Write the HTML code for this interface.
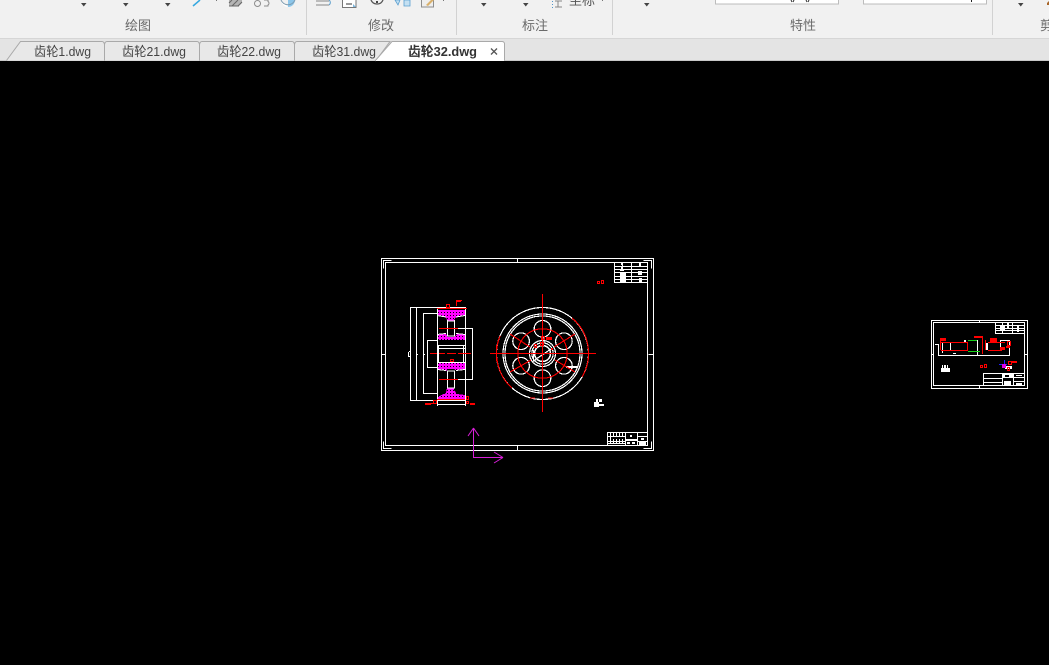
<!DOCTYPE html>
<html lang="zh">
<head>
<meta charset="utf-8">
<title>齿轮32.dwg</title>
<style>
html,body{margin:0;padding:0;background:#000}
body{width:1049px;height:665px;overflow:hidden;position:relative;font-family:"Liberation Sans","Noto Sans CJK SC",sans-serif}
svg{position:absolute;left:0;top:0;display:block}
text{font-family:"Liberation Sans","Noto Sans CJK SC",sans-serif}
</style>
</head>
<body>
<svg width="1049" height="665" viewBox="0 0 1049 665" xmlns="http://www.w3.org/2000/svg">
<defs>
<pattern id="h" width="3" height="3" patternUnits="userSpaceOnUse">
<rect width="3" height="3" fill="#ff00ff"/><rect width="1" height="1" fill="#000"/>
</pattern>
</defs>
<rect width="1049" height="665" fill="#000"/>
<!-- ribbon -->
<rect width="1049" height="38" fill="#f1f1f1"/>
<rect y="38" width="1049" height="1" fill="#d6d6d6"/>
<rect y="39" width="1049" height="21" fill="#e4e4e4"/>
<rect y="60" width="1049" height="1" fill="#c8c8c8"/>
<g fill="#d2d2d2">
<rect x="306" y="0" width="1" height="35"/><rect x="456" y="0" width="1" height="35"/>
<rect x="612" y="0" width="1" height="35"/><rect x="992" y="0" width="1" height="35"/>
</g>
<g fill="#6a6a6a" font-size="13">
<text x="125" y="30">绘图</text><text x="368" y="30">修改</text><text x="522" y="30">标注</text>
<text x="790" y="30">特性</text><text x="1040" y="30">剪</text>
</g>
<!-- dropdown arrows -->
<g fill="#444">
<path d="M81 3h5.500l-2.750 3.500z"/><path d="M123 3h5.500l-2.750 3.500z"/><path d="M165 3h5.500l-2.750 3.500z"/>
<path d="M481 3h5.500l-2.750 3.500z"/><path d="M523 3h5.500l-2.750 3.500z"/><path d="M644 3h5.500l-2.750 3.500z"/><path d="M1018 3h5.500l-2.750 3.500z"/>
</g>
<!-- partial ribbon icons -->
<path d="M193 6L200 0" stroke="#35a8e0" stroke-width="1.500" fill="none"/>
<rect x="216" y="0" width="1" height="1" fill="#777"/>
<path d="M229 0h13v3l-3 3h-10z" fill="#b4b4b4"/>
<path d="M229 6h10M232 0l-3 3M238 0l-6 6M242 2l-4 4" stroke="#666" fill="none"/>
<g fill="none" stroke="#8c8c8c"><circle cx="257.500" cy="3.500" r="3"/><path d="M264 0h4v1.500a2 2 0 0 1 0 3.500v1h-4"/></g>
<path d="M281 0a7.500 7.500 0 0 0 7 7z" fill="#fff"/><path d="M288 0v7a7 7 0 0 0 7-7z" fill="#8cc6ea"/>
<path d="M281 0a7.500 7.500 0 0 0 14 0" fill="none" stroke="#7c9bb0"/>
<path d="M316 1h13M316 5h13" stroke="#888" fill="none"/><path d="M329 0a3 3 0 0 1 0 5" stroke="#5e9fcc" fill="none"/>
<path d="M342.500 0v7.500H356V0" fill="#fff" stroke="#777"/><path d="M346 4h6" stroke="#333"/><path d="M353 4l3 3h-3z" fill="#7cb8e0"/>
<path d="M371 0a6.500 6.500 0 0 0 12 0" fill="none" stroke="#555" stroke-width="1.300"/><rect x="376" y="1" width="2" height="2" fill="#444"/>
<path d="M395 0l3 5 2-5zM404 0v6h6V0z" fill="#c4e0f2" stroke="#5a9fd0" stroke-width=".8"/>
<rect x="421.500" y="-1" width="12" height="8" fill="#eee" stroke="#8d8d8d"/><path d="M426 5l5-5h3l-6 6z" fill="#d9b06a"/>
<rect x="443" y="0" width="1" height="1" fill="#777"/>
<g fill="#4f94c9"><rect x="552" y="1" width="1" height="1"/><rect x="552" y="4" width="1" height="1"/><rect x="552" y="7" width="1" height="1"/></g>
<path d="M555 1h7M558 1v6M555 7h7" stroke="#888" fill="none"/>
<text x="569" y="5" font-size="13" fill="#555">坐标</text>
<rect x="602" y="0" width="1" height="1" fill="#777"/>
<!-- inputs -->
<rect x="715.500" y="-4" width="123" height="8" fill="#fff" stroke="#bcbcbc"/>
<rect x="863.500" y="-4" width="123" height="8" fill="#fff" stroke="#bcbcbc"/>
<path d="M791 0l1 2M794 0l-1 2M806 0l1 2M809 0l-1 2" stroke="#333" fill="none"/>
<rect x="971" y="0" width="1" height="2" fill="#222"/>
<path d="M1047 3l2-2v4h-2z" fill="#a7662a"/>
<!-- tabs -->
<g fill="#e8e8e8" stroke="#a9a9a9">
<path d="M6.500 60.500L20.500 41.500H102q2 0 2.500 3V60.500"/>
<path d="M104.500 60.500V44.500q.5-3 2.500-3H197q2 0 2.500 3V60.500"/>
<path d="M199.500 60.500V44.500q.5-3 2.500-3H292q2 0 2.500 3V60.500"/>
<path d="M294.500 60.500V44.500q.5-3 2.500-3H390L376 60.500"/>
</g>
<path d="M375 61L392 41.500H502q2 0 2.500 2V60.500" fill="#fff" stroke="#a9a9a9"/>
<rect x="376" y="60" width="128" height="1" fill="#fff"/>
<g font-size="13" fill="#444">
<text x="34" y="56" textLength="57" lengthAdjust="spacingAndGlyphs">齿轮1.dwg</text>
<text x="122" y="56" textLength="64" lengthAdjust="spacingAndGlyphs">齿轮21.dwg</text>
<text x="217" y="56" textLength="64" lengthAdjust="spacingAndGlyphs">齿轮22.dwg</text>
<text x="312" y="56" textLength="64" lengthAdjust="spacingAndGlyphs">齿轮31.dwg</text>
</g>
<text x="408" y="56" font-size="13" font-weight="700" fill="#333" textLength="69" lengthAdjust="spacingAndGlyphs">齿轮32.dwg</text>
<path d="M491 48.500l6 6M497 48.500l-6 6" stroke="#555" stroke-width="1.300" fill="none"/>

<!-- main drawing frame -->
<g fill="none" stroke="#fff" shape-rendering="crispEdges">
<rect x="381.500" y="258.500" width="272" height="192"/>
<rect x="385.500" y="262.500" width="262" height="183"/>
<path d="M383.500 268.500v-8h8M383.500 441.500v7h8M651.500 268.500v-8h-8M651.500 441.500v7h-8"/>
<path d="M517.500 258.500v4M517.500 445.500v5M381.500 354.500h4M648.500 354.500h5"/>
</g>

<!-- left section view: hatching -->
<g fill="url(#h)" shape-rendering="crispEdges">
<path d="M437 310H465V315L456 317 454 320V321H448L447 320 446 317 437 315z"/>
<path d="M437 340H465V335L457 334 454 337H448L446 334 437 335z"/>
<path d="M437 362H465V369L457 371 454 369H448L446 371 437 369z"/>
<path d="M437 399H465V395L457 394 454 390V388H447L446 393 437 397z"/>
</g>
<!-- left section view: lines -->
<g fill="none" stroke="#fff" shape-rendering="crispEdges">
<path d="M437.500 307.500H410.500V400.500H465.500V307.500H437.500V405"/>
<path d="M416.500 307.500V400.500"/>
<path d="M437.500 313.500H423.500V393.500H437.500"/>
<path d="M437.500 340.500H427.500V367.500H437.500"/>
<path d="M455.500 328.500H472.500V379.500H455.500"/>
<path d="M409 352.500h-0.500V356.500H410M409 351.500H410"/>
<path d="M416 354.500h2M423 354.500h2"/>
<path d="M437 345.500H465M437 348.500H465M437 362.500H465"/>
<path d="M438.500 345V362M463.500 345V362"/>
<path d="M447.500 320V336M454.500 320V336M447.500 371V388M454.500 371V388M447 321h8M447 336h8M447 371h8M447 388h8"/>
<path d="M437 315.500l9 1.500M465 315.500l-9 1.500M437 334.500l9-1M465 334.500l-9-1M437 369.500l9 1M465 369.500l-9 1"/>
<path d="M437 399.500H465M437 404.500H465M465.500 399V406"/>
<path d="M437.500 405V406"/>
</g>
<g fill="none" stroke="#f00" shape-rendering="crispEdges">
<path d="M437 308.500H467"/>
<path d="M456.500 306V301M456 300.500H462M456 301.500H461"/>
<rect x="446.500" y="304.500" width="3" height="3"/>
<path d="M439 328.500H458M439 379.500H458"/>
<path d="M430 353.500h7M439 353.500h6M447 353.500h9M458 353.500h8M466 353.500h5"/>
<rect x="450.500" y="359.500" width="3" height="2"/>
<rect x="433.500" y="400.500" width="3" height="3"/>
<path d="M425 403.500H436M425 404.500H431"/>
<rect x="466.500" y="396.500" width="2" height="3"/>
<rect x="466.500" y="401.500" width="2" height="2"/>
<path d="M470 403.500H475M470 404.500H475"/>
<path d="M437 399.500H465"/>
</g>

<!-- right circular view -->
<g fill="none" stroke="#fff" stroke-width="1.200" shape-rendering="crispEdges">
<circle cx="542.500" cy="353.500" r="46"/>
<circle cx="542.500" cy="353.500" r="39.500"/>
<circle cx="542.500" cy="353.500" r="37.500"/>
<circle cx="542.500" cy="328.800" r="8.300"/>
<circle cx="542.500" cy="378.200" r="8.300"/>
<circle cx="521.100" cy="341.200" r="8.300"/>
<circle cx="563.900" cy="341.200" r="8.300"/>
<circle cx="521.100" cy="365.800" r="8.300"/>
<circle cx="563.900" cy="365.800" r="8.300"/>
<circle cx="542.500" cy="353.500" r="13"/>
<circle cx="542.500" cy="353.500" r="10.700"/>
<circle cx="542.500" cy="353.500" r="8" stroke-width="1.500"/>
<path d="M534 360.500L551 349M533.500 350v11h3"/>
<path d="M541 336.500h3v7"/>
</g>
<rect x="566" y="366" width="11" height="2" fill="#fff"/>
<g fill="none" stroke="#f00" stroke-width="1.100" shape-rendering="crispEdges">
<circle cx="542.500" cy="353.500" r="24.700"/>
<path d="M572 318A46 46 0 0 1 582 377M500 336A46 46 0 0 0 512 388M530 398h5M548 398h5"/>
<path d="M542.500 294V412M490 353.500H596"/>
<path d="M510 334L530 347M555 360L575 372M510 372L531 360M554 347L575 334"/>
<rect x="541.500" y="336.500" width="3" height="3"/>
<rect x="534.500" y="344.500" width="2" height="3"/>
<rect x="540.500" y="342.500" width="3" height="3"/>
</g>
<g fill="#f00" shape-rendering="crispEdges">
<rect x="546" y="337" width="6" height="3"/><rect x="551" y="348" width="2" height="2"/>
<rect x="496" y="345" width="1" height="16"/>
</g>

<!-- top-right title block -->
<g fill="none" stroke="#fff" shape-rendering="crispEdges">
<path d="M614.500 262.500V282.500H648M615 266.500H648M615 269.500H648M615 272.500H648M615 276.500H648M615 279.500H648"/>
<path d="M631.500 263V282"/>
</g>
<g fill="#fff" shape-rendering="crispEdges">
<rect x="620" y="273" width="6" height="10"/><rect x="621" y="263" width="2" height="7"/><rect x="620" y="269" width="4" height="2"/>
<rect x="639" y="263" width="2" height="3"/><rect x="638" y="271" width="4" height="4"/><rect x="639" y="278" width="3" height="5"/>
</g>
<g fill="#000" shape-rendering="crispEdges"><rect x="621" y="265" width="1" height="1"/></g>
<g fill="none" stroke="#f00" shape-rendering="crispEdges">
<rect x="597.500" y="281.500" width="2" height="2"/><rect x="601.500" y="280.500" width="2" height="3"/>
</g>

<!-- bottom-right title block -->
<g fill="none" stroke="#fff" shape-rendering="crispEdges">
<path d="M607.500 433V445M607 432.500H648M607 436.500H625M607 441.500H625M607 443.500H625"/>
<path d="M625.500 433V445M637.500 433V445M638 436.500H648M638 441.500H648"/>
<path d="M626 439.500H637"/>
</g>
<g fill="#fff" shape-rendering="crispEdges">
<rect x="610" y="433" width="1" height="11"/><rect x="613" y="433" width="1" height="4"/><rect x="616" y="433" width="1" height="4"/><rect x="619" y="433" width="1" height="4"/><rect x="622" y="433" width="1" height="4"/>
<rect x="613" y="439" width="1" height="5"/><rect x="616" y="439" width="1" height="5"/><rect x="619" y="439" width="1" height="5"/><rect x="622" y="439" width="1" height="5"/>
<rect x="630" y="435" width="2" height="2"/>
<rect x="626" y="439" width="11" height="2"/><rect x="627" y="442" width="3" height="2"/><rect x="632" y="442" width="3" height="2"/>
<rect x="639" y="442" width="7" height="3"/><rect x="641" y="438" width="3" height="2"/>
</g>
<!-- small mark -->
<g fill="#fff" shape-rendering="crispEdges">
<rect x="594" y="402" width="5" height="5"/><rect x="596" y="399" width="2" height="3"/><rect x="599" y="399" width="3" height="3"/><rect x="599" y="404" width="5" height="2"/>
</g>

<!-- UCS -->
<g fill="none" stroke="#d81fd8" stroke-width="1">
<path d="M473.500 428V457.500H503" shape-rendering="crispEdges"/>
<path d="M473.500 428L468 436M473.500 428L479 436M503 457.500L494 452M503 457.500L494 463"/>
</g>

<!-- thumbnail drawing -->
<g fill="none" stroke="#fff" shape-rendering="crispEdges">
<rect x="931.500" y="320.500" width="96" height="68"/>
<rect x="933.500" y="322.500" width="91" height="63"/>
<path d="M979.500 320v3M979.500 386v3M931 354.500h3M1024 354.500h4"/>
<path d="M995.500 323V333.500H1024M996 325.500H1024M996 328.500H1024M996 330.500H1024M1002.500 323V333M1012.500 323V333"/>
<path d="M983.500 373V385M983 373.500H1024M984 378.500H1002M984 382.500H1002M1002.500 373V385M1013.500 373V385M1014 377.500H1024M1014 381.500H1024"/>
<path d="M938.500 344V355.500H1009.500V340.500H1000.500V348M935 344.500H938"/>
<path d="M942.500 343V353M950.500 342V351M977.500 340V355"/>
</g>
<g fill="#fff" shape-rendering="crispEdges">
<rect x="964" y="340" width="2" height="2"/><rect x="986" y="343" width="2" height="7"/><rect x="953" y="353" width="3" height="1"/>
<rect x="941" y="368" width="9" height="4"/><rect x="942" y="365" width="1" height="3"/><rect x="944" y="365" width="2" height="3"/><rect x="947" y="365" width="1" height="3"/>
<rect x="1000" y="326" width="5" height="4"/><rect x="1007" y="323" width="2" height="6"/><rect x="1017" y="326" width="2" height="6"/>
<rect x="1002" y="374" width="11" height="4"/><rect x="1004" y="381" width="7" height="4"/>
<rect x="1016" y="383" width="6" height="2"/><rect x="1016" y="375" width="6" height="1"/>
<rect x="1005" y="366" width="7" height="3"/>
</g>
<g fill="#000" shape-rendering="crispEdges"><rect x="1005" y="375" width="4" height="2"/></g>
<g fill="none" stroke="#f00" shape-rendering="crispEdges">
<path d="M941 342.500H968M941 350.500H968M967.500 342V351M988 342.500H1005M988 350.500H1002"/>
<path d="M974 336.500H982M982.500 336V354M985.500 340V350M940.500 341V350"/>
<rect x="980.500" y="365.500" width="2" height="2"/><rect x="984.500" y="364.500" width="2" height="3"/>
<rect x="1008.500" y="361.500" width="3" height="3"/><rect x="1007.500" y="367.500" width="2" height="3"/>
<rect x="1007.500" y="341.500" width="3" height="4"/>
</g>
<g fill="#f00" shape-rendering="crispEdges">
<rect x="940" y="338" width="6" height="3"/><rect x="990" y="338" width="7" height="4"/>
<rect x="1000" y="347" width="5" height="3"/><rect x="1006" y="346" width="4" height="2"/>
<rect x="1012" y="361" width="5" height="2"/><rect x="974" y="336" width="8" height="2"/>
</g>
<g fill="none" stroke="#19d219" shape-rendering="crispEdges"><path d="M968 340.500H977M968 351.500H980"/></g>
<path d="M999 364.500H1007M1004.500 360V368" stroke="#2020ff" fill="none" shape-rendering="crispEdges"/>
<rect x="1002" y="364" width="4" height="4" fill="#e000e0"/>
</svg>
</body>
</html>
